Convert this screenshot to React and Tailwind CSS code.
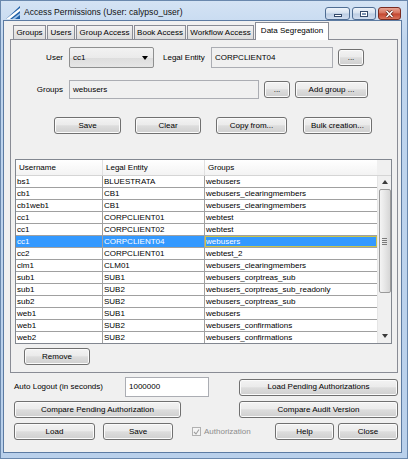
import React from 'react'

const rows = [
  ['bs1', 'BLUESTRATA', 'webusers'],
  ['cb1', 'CB1', 'webusers_clearingmembers'],
  ['cb1web1', 'CB1', 'webusers_clearingmembers'],
  ['cc1', 'CORPCLIENT01', 'webtest'],
  ['cc1', 'CORPCLIENT02', 'webtest'],
  ['cc1', 'CORPCLIENT04', 'webusers'],
  ['cc2', 'CORPCLIENT01', 'webtest_2'],
  ['clm1', 'CLM01', 'webusers_clearingmembers'],
  ['sub1', 'SUB1', 'webusers_corptreas_sub'],
  ['sub1', 'SUB2', 'webusers_corptreas_sub_readonly'],
  ['sub2', 'SUB2', 'webusers_corptreas_sub'],
  ['web1', 'SUB1', 'webusers'],
  ['web1', 'SUB2', 'webusers_confirmations'],
  ['web2', 'SUB2', 'webusers_confirmations'],
]

const tabs = [
  ['Groups', 'w-[33px]'],
  ['Users', 'w-[28px]'],
  ['Group Access', 'w-[57px]'],
  ['Book Access', 'w-[52px]'],
  ['Workflow Access', 'w-[67px]'],
]

function Btn({ className = '', children }) {
  return (
    <button
      type="button"
      className={`flex h-[17px] shrink-0 items-center justify-center rounded-[3px] border border-[#707070] bg-[linear-gradient(#f3f3f3,#ebebeb_45%,#dddddd_52%,#cfcfcf)] text-[8px] leading-none text-black shadow-[inset_0_0_0_1px_#fbfbfb] ${className}`}
    >
      {children}
    </button>
  )
}

function Field({ className = '', children }) {
  return (
    <div className={`flex shrink-0 items-center border border-[#abadb3] pl-[3px] text-[8px] text-black ${className}`}>
      {children}
    </div>
  )
}

function CaptionBtn({ className = '', children }) {
  return (
    <div className={`flex h-[13px] items-center justify-center rounded-[3px] border border-[#4f6d93] ${className}`}>
      {children}
    </div>
  )
}

export default function App() {
  return (
    <div className="flex h-[459px] w-[408px] flex-col border border-[#6a88ad] bg-[linear-gradient(#d4e3f4,#bfd5ee_40px,#b9d0eb)] font-['Liberation_Sans',Arial,sans-serif] text-black">
      {/* title bar */}
      <div className="flex h-[19px] shrink-0 items-center">
        <svg className="ml-[5px] mt-[3px]" width="14" height="13" viewBox="0 0 14 13">
          <polygon points="0,13 14,0 14,13" fill="#1f5fa6" />
          <polygon points="0,13 14,2 14,5 4,13" fill="#ffffff" />
          <polygon points="6,13 14,7 14,9 9,13" fill="#9cc3ea" />
        </svg>
        <span className="ml-[4px] mt-[3px] text-[8.6px] text-[#111]">Access Permissions (User: calypso_user)</span>
        <div className="ml-auto mr-[6px] mt-[6px] flex items-end gap-[2px] self-start">
          <CaptionBtn className="w-[25px] bg-[linear-gradient(#eef3fa,#d5e1ef_48%,#bccde3_52%,#cfdcee)]">
            <div className="mt-[4px] h-[3px] w-[8px] border border-[#34496a] bg-white" />
          </CaptionBtn>
          <CaptionBtn className="w-[24px] bg-[linear-gradient(#eef3fa,#d5e1ef_48%,#bccde3_52%,#cfdcee)]">
            <div className="h-[6px] w-[8px] border border-[#34496a] bg-white p-px">
              <div className="h-full w-full bg-[#7e95b4]" />
            </div>
          </CaptionBtn>
          <CaptionBtn className="w-[23px] border-[#7a2b20] bg-[linear-gradient(#e8a493,#d4705a_48%,#c2452e_52%,#d9735b)]">
            <svg width="9" height="8" viewBox="0 0 9 8">
              <path d="M1.5 1 L7.5 7 M7.5 1 L1.5 7" stroke="#5a2016" strokeWidth="3" />
              <path d="M1.5 1 L7.5 7 M7.5 1 L1.5 7" stroke="#ffffff" strokeWidth="1.6" />
            </svg>
          </CaptionBtn>
        </div>
      </div>

      {/* client */}
      <div className="mb-[5px] ml-[2px] mr-[5px] flex flex-1 flex-col border border-[#5c7ba2] bg-[#f0f0f0]">
        {/* tabs */}
        <div className="flex h-[18px] shrink-0 items-end gap-px pl-[9px]">
          {tabs.map(([t, w]) => (
            <div
              key={t}
              className={`flex h-[14px] items-center justify-center border-x border-t border-[#898c95] bg-[linear-gradient(#f3f3f3,#e6e6e6_50%,#dcdcdc)] text-[8px] ${w}`}
            >
              {t}
            </div>
          ))}
          <div className="relative z-10 -mb-px flex h-[18px] w-[74px] items-start justify-center border-x border-t border-[#898c95] bg-white pt-[2px] text-[8px]">
            Data Segregation
          </div>
        </div>

        {/* panel */}
        <div className="ml-[6px] flex h-[334px] w-[388px] shrink-0 flex-col border border-[#898c95] bg-[#f0f0f0] text-[8px]">
          <div className="mt-[7px] flex h-[21px] items-center">
            <span className="w-[52px] text-right">User</span>
            <div className="ml-[6px] flex h-[21px] w-[85px] items-center rounded-[2px] border border-[#8e8f8f] bg-[linear-gradient(#f2f2f2,#ebebeb_50%,#dddddd_52%,#e6e6e6)] pl-[3px]">
              <span>cc1</span>
              <svg className="ml-auto mr-[5px]" width="6" height="4" viewBox="0 0 6 4">
                <polygon points="0,0 6,0 3,4" fill="#000" />
              </svg>
            </div>
            <span className="ml-[9px] w-[48px]">Legal Entity</span>
            <Field className="h-[21px] w-[122px]">CORPCLIENT04</Field>
            <Btn className="ml-[5px] w-[26px]">...</Btn>
          </div>

          <div className="mt-[12px] flex h-[19px] items-center">
            <span className="w-[52px] text-right">Groups</span>
            <Field className="ml-[6px] h-[19px] w-[190px]">webusers</Field>
            <Btn className="ml-[5px] w-[26px]">...</Btn>
            <Btn className="ml-[5px] w-[73px]">Add group ...</Btn>
          </div>

          <div className="mt-[18px] flex h-[17px] items-center pl-[43px]">
            <Btn className="w-[67px]">Save</Btn>
            <Btn className="ml-[14px] w-[66px]">Clear</Btn>
            <Btn className="ml-[15px] w-[71px]">Copy from...</Btn>
            <Btn className="ml-[16px] w-[69px]">Bulk creation...</Btn>
          </div>

          {/* table */}
          <div className="ml-[4px] mt-[25px] w-[377px] border border-[#828790] bg-white">
            <div className="flex h-[16px] border-b border-[#d5d5d5] bg-[linear-gradient(#ffffff,#f3f3f3)]">
              <div className="flex w-[87px] items-center border-r border-[#e0e0e0] pl-[3px]">Username</div>
              <div className="flex w-[102px] items-center border-r border-[#e0e0e0] pl-[3px]">Legal Entity</div>
              <div className="flex w-[172px] items-center pl-[3px]">Groups</div>
              <div className="w-[14px] bg-[#f0f0f0]" />
            </div>
            <div className="flex h-[167px]">
              <div className="w-[361px] overflow-hidden">
                {rows.map(([u, le, g], i) => {
                  const sel = i === 5
                  return (
                    <div
                      key={i}
                      className={`flex h-[12px] border-b border-[#a0a0a0] leading-[11px] ${sel ? 'bg-[#3399ff] text-white' : 'text-black'}`}
                    >
                      <div className="w-[87px] border-r border-[#a0a0a0] pl-px">{u}</div>
                      <div className="w-[102px] border-r border-[#a0a0a0] pl-px">{le}</div>
                      <div className={`w-[172px] pl-px ${sel ? 'outline outline-1 -outline-offset-1 outline-[#c9c44e]' : ''}`}>{g}</div>
                    </div>
                  )
                })}
              </div>
              <div className="flex w-[14px] flex-col items-center border-l border-[#e5e5e5] bg-[#f0f0f0]">
                <svg className="mt-[4px]" width="6" height="4" viewBox="0 0 6 4">
                  <polygon points="0,4 6,4 3,0" fill="#3a3a3a" />
                </svg>
                <div className="mt-[5px] flex h-[104px] w-[12px] flex-col items-center justify-center gap-px rounded-[2px] border border-[#9a9a9a] bg-[linear-gradient(90deg,#f4f4f4,#e6e6e6_50%,#d6d6d6)]">
                  <div className="h-px w-[5px] bg-[#7a7a7a]" />
                  <div className="h-px w-[5px] bg-[#7a7a7a]" />
                  <div className="h-px w-[5px] bg-[#7a7a7a]" />
                  <div className="h-px w-[5px] bg-[#7a7a7a]" />
                </div>
                <svg className="mb-[5px] mt-auto" width="6" height="4" viewBox="0 0 6 4">
                  <polygon points="0,0 6,0 3,4" fill="#3a3a3a" />
                </svg>
              </div>
            </div>
          </div>

          <Btn className="ml-[13px] mt-[4px] w-[66px]">Remove</Btn>
        </div>

        {/* bottom area */}
        <div className="mt-[4px] flex h-[20px] items-center pl-[10px] text-[8px]">
          <span className="w-[111px]">Auto Logout (in seconds)</span>
          <Field className="h-[20px] w-[84px] bg-white">1000000</Field>
          <Btn className="ml-[30px] w-[159px]">Load Pending Authorizations</Btn>
        </div>
        <div className="mt-[4px] flex h-[17px] items-center pl-[10px]">
          <Btn className="w-[167px]">Compare Pending Authorization</Btn>
          <Btn className="ml-[58px] w-[159px]">Compare Audit Version</Btn>
        </div>
        <div className="mt-[5px] flex h-[17px] items-center pl-[10px] text-[8px]">
          <Btn className="w-[81px]">Load</Btn>
          <Btn className="ml-[8px] w-[70px]">Save</Btn>
          <div className="ml-[19px] flex items-center gap-[3px] text-[#8d8d8d]">
            <div className="flex h-[9px] w-[9px] items-center justify-center border border-[#b1b1b1] bg-[#f4f4f4]">
              <svg width="7" height="6" viewBox="0 0 7 6">
                <path d="M1 3 L3 5 L6 0.5" stroke="#a0a0a0" strokeWidth="1.1" fill="none" />
              </svg>
            </div>
            <span>Authorization</span>
          </div>
          <Btn className="ml-auto w-[59px]">Help</Btn>
          <Btn className="ml-[4px] mr-[3px] w-[60px]">Close</Btn>
        </div>
      </div>
    </div>
  )
}
